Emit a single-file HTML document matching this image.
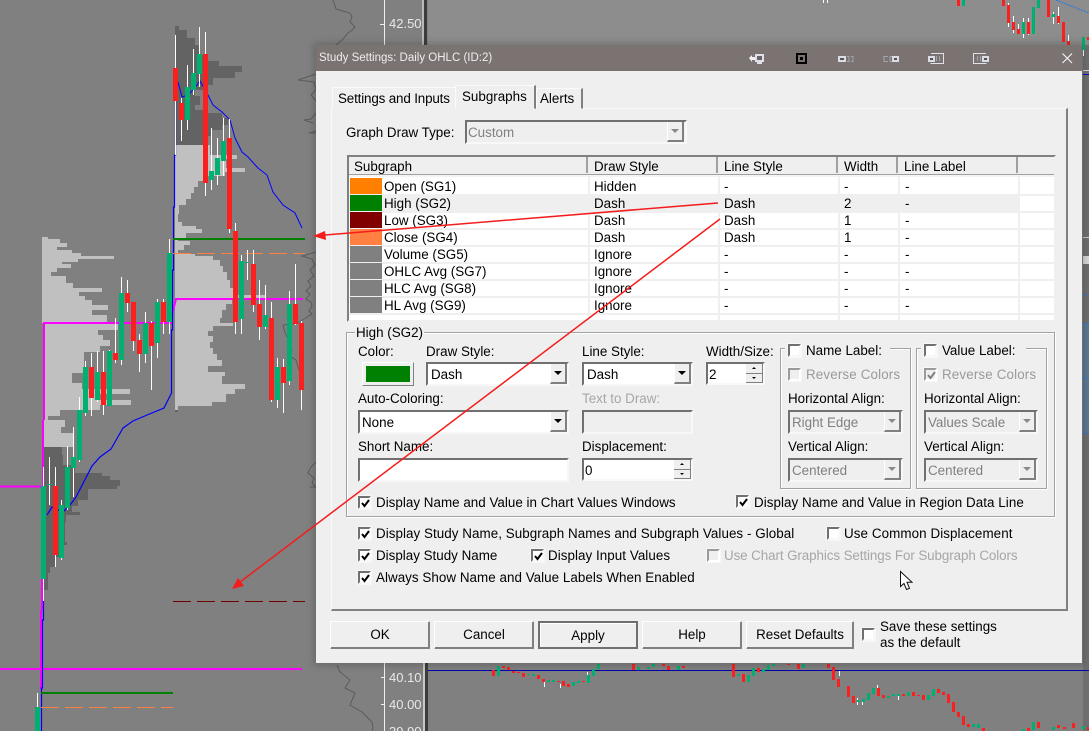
<!DOCTYPE html>
<html><head><meta charset="utf-8">
<style>
html,body{margin:0;padding:0;background:#808080}
#root{position:relative;width:1089px;height:731px;overflow:hidden;background:#808080;font:13.4px/16px "Liberation Sans",sans-serif;color:#000}
svg.c{position:absolute;left:0;top:0}
#dlg{position:absolute;left:316px;top:45px;width:766px;height:618px;background:#efefef;box-shadow:0 0 7px 2px rgba(40,40,40,.28)}
#title{position:absolute;left:316px;top:45px;width:766px;height:26px;background:#7b7272}
.t{position:absolute;white-space:nowrap;line-height:16px;font-size:13.4px;margin-top:1px}
.g{color:#9a9a9a}
.w{color:#f0eeee}
.b{position:absolute;box-sizing:border-box}
.f{position:absolute;box-sizing:border-box;background:#fff;border:2px solid;border-color:#707070 #f8f8f8 #f8f8f8 #707070}
.f.d{background:#efefef}
.ab{position:absolute;right:0;top:0;bottom:0;width:17px;background:#efefef;border-left:1px solid #fff;border-right:2px solid #808080;border-bottom:2px solid #808080;box-sizing:border-box}
.ab:after{content:"";position:absolute;left:3px;top:7px;border:4px solid transparent;border-top:4px solid #000;border-bottom:0}
.d .ab:after{border-top-color:#8a8a8a}
.sp{position:absolute;right:0;width:17px;height:10px;background:#efefef;border-right:1px solid #808080;border-bottom:1px solid #808080;box-sizing:border-box}
.sp:after{content:"";position:absolute;left:6px;top:3px;border:2px solid transparent}
.sp.u{top:0}.sp.u:after{border-bottom:2px solid #000;border-top:0}
.sp.n{top:10px}.sp.n:after{border-top:2px solid #000;border-bottom:0}
.cb{position:absolute;box-sizing:border-box;width:13px;height:13px;background:#fff;border:2px solid;border-color:#707070 #f8f8f8 #f8f8f8 #707070;box-shadow:0 0 0 .5px #fff}
.cb.d{background:#efefef;border-color:#9a9a9a #fff #fff #9a9a9a}
.cb svg{position:absolute;left:-1px;top:-1px}
.btn{position:absolute;box-sizing:border-box;top:621px;height:28px;background:#efefef;border:1px solid;border-color:#fff #808080 #808080 #fff;box-shadow:inset -1px -1px 0 #808080;text-align:center;line-height:26px}
.grp{position:absolute;box-sizing:border-box;border:1px solid #a2a2a2;box-shadow:1px 1px 0 #fff,inset 1px 1px 0 #fff}
.sw{position:absolute;left:350px;width:32px;height:16px}
.hl{position:absolute;left:349px;width:706px;height:2px;background:#efefef}
.vl{position:absolute;top:176px;height:144px;width:2px;background:#efefef}
.hs{position:absolute;top:157px;width:2px;height:16px;background:#a0a0a0}
</style></head><body>
<div id="root">
<svg class="c" width="1089" height="731" viewBox="0 0 1089 731" shape-rendering="crispEdges">
<rect x="0" y="0" width="1089" height="731" fill="#808080"/>
<rect x="428" y="0" width="661" height="45" fill="#8d8d8d"/>
<rect x="384" y="0" width="1" height="45" fill="#f0f0f0"/>
<rect x="422" y="0" width="2" height="45" fill="#f0f0f0" opacity=".5"/>
<rect x="424" y="0" width="3" height="45" fill="#3c3c3c"/>
<rect x="384" y="663" width="1" height="68" fill="#f0f0f0"/>
<rect x="423" y="663" width="2" height="68" fill="#c8c8c8"/>
<rect x="425" y="663" width="3" height="68" fill="#3c3c3c"/>
<rect x="380" y="24" width="4" height="1" fill="#eee"/><rect x="381" y="677" width="3" height="1" fill="#eee"/><rect x="381" y="704" width="3" height="1" fill="#eee"/>
<rect x="1083" y="45" width="6" height="686" fill="#6f6f6f"/>
<rect x="1083" y="323" width="6" height="110" fill="#5a7896"/>
<rect x="1083" y="70" width="6" height="1" fill="#ddd"/><rect x="1083" y="74" width="6" height="1" fill="#0000d8"/>
<rect x="1083" y="237" width="6" height="1" fill="#ccc"/><rect x="1083" y="256" width="6" height="8" fill="#d8d8d8"/>
<rect x="1083" y="323" width="4" height="1" fill="#1e78e0"/><rect x="1083" y="378" width="4" height="1" fill="#1e78e0"/><rect x="1083" y="433" width="4" height="1" fill="#1e78e0"/><rect x="1083" y="294" width="4" height="1" fill="#1e78e0"/>
<rect x="428" y="670" width="661" height="1" fill="#0000b0"/>
<!-- profiles dark -->
<path fill="#636363" d="M175 26H179V30H187V38H195V45H200V55H203V61H219V66H242V72H235V78H213V85H208V90H195V96H200V105H195V110H207V113H222V118H228V125H222V130H212V136H207V145H175Z"/>
<path fill="#636363" d="M44 447H62V455H63V465H75V473H102V476H110V480H120V486H117V489H88V500H78V506H72V512H80V515H66V522H65V542H67V545H64V557H55V567H50V573H48V590H44Z"/>
<!-- profiles light -->
<path fill="#c0c0c0" d="M175 145H210V155H237V159H226V168H245V172H225V176H205V181H198V187H194V193H191V199H186V205H179V214H178V222H182V226H196V229H202V233H186V238H178V241H190V245H184V250H178V254H195V256H213V260H220V266H223V272H227V280H230V288H233V295H265V298H232V304H226V310H222V318H220V323H233V326H213V331H208V336H213V342H210V348H213V354H217V360H222V366H208V372H225V376H222V384H245V389H235V394H226V402H212V406H178V410H175Z"/>
<path fill="#c0c0c0" d="M42 237H48V239H60V243H67V247H57V250H72V253H81V256H114V259H78V262H62V264H71V268H57V272H51V276H66V283H73V288H102V292H79V296H85V300H92V305H108V310H92V315H107V322H118V330H98V335H103V340H110V346H100V352H84V373H72V383H82V389H130V394H100V400H131V405H100V410H60V416H48V420H65V427H61V433H73V447H44V323H42Z"/>
<rect x="175" y="410" width="3" height="2" fill="#636363"/>
<!-- depth outlines -->
<g fill="none" stroke="#5c5c5c" stroke-width="1" shape-rendering="auto">
<path d="M316 74L298 80l16 2 2 8-5 5 5 6M316 113l-5 6-7 1 9 3M316 131l-7 2h7M316 252l-14 4 10 3 3 6-5 5 4 6-6 5 3 5-5 5 4 3-4 5 5 3 1 4-3 5 3 3-8 5-6 4-15 2 2 8 3 6 1 6 3 5-2 6 6 4 3 10 4 5-3 10 4 4M316 462l-5 5-3 6 6 5-2 5 4 4-6 0"/>
<path d="M333 0l3 9 14 4 2 4-2 5 5 5-3 3-5 4-4 5-7 6"/>
<path d="M337 665l3 7 10 8-5 8 10 5-5 12 12 7 10 10 1 6-1 3"/>
</g>
<!-- lines -->
<g fill="none" shape-rendering="auto">
<path stroke="#ff00ff" stroke-width="2" d="M44 420V323H172V315L176 299H303M43 420V486M42 486V610M41 610V690"/>
<path stroke="#ff00ff" stroke-width="2" d="M0 486.500H41M0 669H302"/>
<path stroke="#0000ff" stroke-width="1.200" d="M175.500 100V155H174.500V207H173.500V270H172.500V330H171.500V393L164 408 147 415 133 421 123 428 111 449 100 457 92 466 76 497 70 505 63 512 52 507 47 515M43.500 600V620H42.500V688H41.500V731"/>
<path stroke="#0000ff" stroke-width="1" d="M178 82L182 97 188 95 193 90 200 81 208 95 213 105 222 112 230 120 235 138 242 152 248 157 258 168 267 175 273 192 283 205 295 213 302 228"/>
<path stroke="#1e78e0" stroke-width="1" stroke-dasharray="2 1" d="M1056 0L1089 13"/>
</g>
<rect x="173" y="238" width="132" height="2" fill="#008000"/>
<path d="M173 253.500H305" stroke="#ff8040" stroke-dasharray="18 6"/>
<path d="M173 601.500H305" stroke="#700000" stroke-dasharray="18 6"/>
<rect x="41" y="692" width="132" height="2" fill="#008000"/>
<path d="M41 707.500H173" stroke="#ff8040" stroke-dasharray="18 6"/>
<!-- wicks -->
<path stroke="#fff" fill="none" d="M175.500 35V155M181.500 98V141M187.500 65V130M193.500 49V95M199.500 27V87M205.500 32V196M211.500 128V190M217.500 138V185M223.500 118V176M229.500 119V233M235.500 223V334M241.500 255V334M247.500 250V280M253.500 250V312M259.500 280V340M265.500 285V329M271.500 302V402M277.500 358V408M283.500 359V413M289.500 291V385M295.500 264V325M301.500 321V410M43.500 467V601M49.500 457V505M55.500 467V567M61.500 500V560M67.500 446V510M73.500 427V497M79.500 397V462M85.500 361V416M91.500 353V416M97.500 351V402M103.500 351V415M109.500 350V406M115.500 318V363M121.500 277V365M127.500 280V312M133.500 302V351M139.500 334V372M145.500 312V363M151.500 321V390M157.500 299V358M163.500 299V334M169.500 239V334M37.500 693V707M1008.500 3V27M1013.500 16V33M1018.500 24V34M1023.500 18V38M1028.500 18V35M1053.500 12V24M1058.500 7V24M1068.500 35V45M823.500 0V3M827.500 0V3M1083.500 50V56M839.500 671V676M544.500 680V687M560.500 684V688M587.500 672V678M857.500 698V705M862.500 699V705M877.500 685V690M898.500 694V700"/>
<!-- red -->
<path fill="#fa2020" d="M173 68h5v33h-5zM179 103h5v17h-5zM203 54h5v129h-5zM227 138h5v91h-5zM233 231h5v91h-5zM251 264h5v41h-5zM257 304h5v23h-5zM269 318h5v82h-5zM281 367h5v16h-5zM293 304h5v20h-5zM299 323h5v67h-5zM53 486h5v69h-5zM89 367h5v31h-5zM101 372h5v33h-5zM113 353h5v7h-5zM125 293h5v10h-5zM131 302h5v39h-5zM137 340h5v14h-5zM149 323h5v23h-5zM161 302h5v20h-5zM957 0h3v6h-3zM1002 0h3v6h-3zM1007 5h3v18h-3zM1012 22h3v8h-3zM1017 29h3v5h-3zM1027 22h3v12h-3zM1047 0h3v17h-3zM1057 16h3v7h-3zM1062 22h3v20h-3zM1067 41h3v4h-3zM1087 37h2v3h-2zM492 670h3v6h-3zM502 666h3v2h-3zM507 667h3v3h-3zM512 671h3v2h-3zM517 672h3v1h-3zM522 673h3v4h-3zM537 675h3v4h-3zM542 679h3v3h-3zM557 681h3v1h-3zM562 681h3v5h-3zM567 684h3v3h-3zM582 681h3v1h-3zM632 664h3v6h-3zM662 664h3v2h-3zM667 666h3v4h-3zM682 666h3v2h-3zM732 664h3v13h-3zM742 674h3v8h-3zM757 668h3v4h-3zM787 664h3v1h-3zM797 664h3v5h-3zM827 664h3v4h-3zM832 667h3v13h-3zM837 679h3v8h-3zM847 686h3v11h-3zM852 696h3v7h-3zM877 688h3v8h-3zM882 695h3v3h-3zM902 694h3v2h-3zM912 692h3v4h-3zM917 695h3v1h-3zM922 695h3v5h-3zM937 689h3v4h-3zM942 692h3v3h-3zM947 694h3v9h-3zM952 702h3v10h-3zM957 712h3v5h-3zM962 716h3v9h-3zM967 724h3v3h-3zM982 728h3v3h-3zM1027 728h3v3h-3zM1037 722h3v6h-3zM1057 725h3v3h-3zM1072 723h3v5h-3zM1087 727h2v3h-2zM1063 727h3v2h-3z"/>
<!-- green -->
<path fill="#00b070" d="M185 87h5v33h-5zM191 73h5v17h-5zM197 54h5v20h-5zM209 171h5v9h-5zM215 158h5v17h-5zM221 141h5v20h-5zM239 261h5v58h-5zM245 262h3v1h-3zM263 315h5v12h-5zM275 367h5v33h-5zM287 304h5v77h-5zM41 486h5v93h-5zM47 484h5v1h-5zM59 505h5v53h-5zM65 467h5v41h-5zM71 457h5v11h-5zM77 410h5v50h-5zM83 367h5v46h-5zM95 372h5v28h-5zM107 351h5v55h-5zM119 293h5v67h-5zM143 323h5v31h-5zM155 302h5v41h-5zM167 253h5v69h-5zM35 707h5v24h-5zM962 0h3v6h-3zM1022 22h3v12h-3zM1032 7h3v27h-3zM1037 0h3v8h-3zM1052 14h3v3h-3zM1082 37h3v13h-3zM497 666h3v10h-3zM527 674h3v1h-3zM532 674h3v2h-3zM547 680h3v2h-3zM552 680h3v2h-3zM572 682h3v4h-3zM577 681h3v2h-3zM587 675h3v8h-3zM592 669h3v7h-3zM597 664h3v5h-3zM637 667h3v3h-3zM647 667h3v2h-3zM652 664h3v3h-3zM677 666h3v4h-3zM737 674h3v2h-3zM747 675h3v7h-3zM752 668h3v8h-3zM762 669h3v3h-3zM767 665h3v5h-3zM772 664h3v2h-3zM802 664h3v4h-3zM857 700h3v2h-3zM862 699h3v3h-3zM867 693h3v7h-3zM872 688h3v6h-3zM887 696h3v2h-3zM892 694h3v2h-3zM897 694h3v2h-3zM907 692h3v4h-3zM927 695h3v5h-3zM932 689h3v7h-3zM972 724h3v3h-3zM977 724h3v4h-3zM1022 729h3v2h-3zM1032 722h3v8h-3zM1052 727h3v3h-3zM1082 726h3v3h-3z"/>
</svg>
<span class="t" style="left:389px;top:15px;color:#e8e8e8;font-size:13px">42.50</span>
<span class="t" style="left:389px;top:669px;color:#e8e8e8;font-size:13px">40.10</span>
<span class="t" style="left:389px;top:696px;color:#e8e8e8;font-size:13px">40.00</span>
<span class="t" style="left:389px;top:723px;color:#e8e8e8;font-size:13px">39.90</span>

<div id="dlg"></div>
<div id="title"></div>
<span class="t w" style="left:319px;top:49px;font-size:11.5px">Study Settings: Daily OHLC (ID:2)</span>
<svg class="c" width="1089" height="80" fill="none" shape-rendering="crispEdges" style="z-index:1">
<path d="M749 58l3-3v2h3v3h-3v2z" fill="#f0f0f4" shape-rendering="auto"/>
<rect x="756" y="55" width="7" height="6" stroke="#dfe0e8" stroke-width="2" fill="#6a6468"/>
<path d="M757 63h5" stroke="#dfe0e8" stroke-width="2"/>
<rect x="797" y="54" width="9" height="9" stroke="#000" stroke-width="2"/><rect x="800" y="57" width="3" height="3" fill="#000"/>
<rect x="839" y="57" width="6" height="4" stroke="#dcdce4" stroke-width="2" fill="#55505a"/>
<path d="M847 56.500h2v5h-2M851 56.500h2v5h-2" stroke="#a4a4ac"/>
<path d="M888 56.500h-4v5h4M892 56.500h-2v5h2" stroke="#a4a4ac"/>
<rect x="893" y="57" width="5" height="4" stroke="#dcdce4" stroke-width="2" fill="#55505a"/>
<path d="M931 53.500h12.500v10h-13" stroke="#e0e0e8"/>
<rect x="929" y="57" width="5" height="4" stroke="#dcdce4" stroke-width="2" fill="#55505a"/>
<path d="M936.500 56v5M939.500 56v5" stroke="#a4a4ac"/>
<path d="M986 53.500h-12.500v10h13" stroke="#e0e0e8"/>
<rect x="983" y="57" width="5" height="4" stroke="#dcdce4" stroke-width="2" fill="#55505a"/>
<path d="M977.500 56v5M980.500 56v5" stroke="#a4a4ac"/>
<path d="M1062.500 53.500l9.500 9.500M1072 53.500l-9.500 9.500" stroke="#f2f2f2" stroke-width="1.200" shape-rendering="auto"/>
</svg>

<!-- panel -->
<div class="b" style="left:331px;top:108px;width:737px;height:503px;border:2px solid;border-color:#fafafa #808080 #808080 #fafafa;border-top-width:1px;border-left-width:1px"></div>
<!-- tabs -->
<div class="b" style="left:332px;top:87px;width:125px;height:22px;background:#efefef;border:1px solid;border-color:#fafafa #efefef #efefef #fafafa"></div>
<div class="b" style="left:455px;top:85px;width:81px;height:24px;background:#efefef;border:1px solid;border-color:#fafafa #808080 #efefef #fafafa;border-right-width:2px"></div>
<div class="b" style="left:536px;top:88px;width:47px;height:21px;background:#efefef;border:1px solid;border-color:#fafafa #808080 #efefef #fafafa;border-right-width:2px"></div>
<span class="t" style="left:338px;top:90px;letter-spacing:-.15px">Settings and Inputs</span>
<span class="t" style="left:462px;top:88px">Subgraphs</span>
<span class="t" style="left:540px;top:90px">Alerts</span>

<span class="t" style="left:346px;top:124px">Graph Draw Type:</span>
<div class="f d" style="left:465px;top:120px;width:222px;height:24px"><div class="ab" style="right:1px"></div></div>
<span class="t" style="left:468px;top:124px;color:#808080">Custom</span>

<!-- grid -->
<div class="b" style="left:347px;top:155px;width:709px;height:167px;background:#fff;border:2px solid;border-color:#808080 #efefef #efefef #808080"></div>
<div class="b" style="left:349px;top:157px;width:705px;height:18px;background:#efefef;border-bottom:1px solid #a0a0a0"></div>
<div class="b" style="left:349px;top:175px;width:705px;height:2px;background:#f4f4f4"></div>
<div class="hs" style="left:586px"></div><div class="hs" style="left:716px"></div><div class="hs" style="left:836px"></div><div class="hs" style="left:896px"></div><div class="hs" style="left:1016px"></div>
<span class="t" style="left:354px;top:158px">Subgraph</span>
<span class="t" style="left:594px;top:158px">Draw Style</span>
<span class="t" style="left:724px;top:158px">Line Style</span>
<span class="t" style="left:844px;top:158px">Width</span>
<span class="t" style="left:904px;top:158px">Line Label</span>
<div class="b" style="left:349px;top:194px;width:669px;height:18px;background:#efefef"></div>
<div class="hl" style="top:194px"></div><div class="hl" style="top:211px"></div><div class="hl" style="top:228px"></div><div class="hl" style="top:245px"></div><div class="hl" style="top:262px"></div><div class="hl" style="top:279px"></div><div class="hl" style="top:296px"></div><div class="hl" style="top:313px"></div>
<div class="vl" style="left:588px"></div><div class="vl" style="left:718px"></div><div class="vl" style="left:838px"></div><div class="vl" style="left:898px"></div><div class="vl" style="left:1018px"></div>
<div class="sw" style="top:178px;background:#ff8000"></div>
<div class="sw" style="top:195px;background:#008000"></div>
<div class="sw" style="top:212px;background:#800000"></div>
<div class="sw" style="top:229px;background:#ff8040"></div>
<div class="sw" style="top:246px;background:#808080"></div>
<div class="sw" style="top:263px;background:#808080"></div>
<div class="sw" style="top:280px;background:#808080"></div>
<div class="sw" style="top:297px;background:#808080"></div>
<span class="t" style="left:384px;top:178px">Open (SG1)</span><span class="t" style="left:594px;top:178px">Hidden</span><span class="t" style="left:724px;top:178px">-</span><span class="t" style="left:844px;top:178px">-</span><span class="t" style="left:905px;top:178px">-</span>
<span class="t" style="left:384px;top:195px">High (SG2)</span><span class="t" style="left:594px;top:195px">Dash</span><span class="t" style="left:724px;top:195px">Dash</span><span class="t" style="left:844px;top:195px">2</span><span class="t" style="left:905px;top:195px">-</span>
<span class="t" style="left:384px;top:212px">Low (SG3)</span><span class="t" style="left:594px;top:212px">Dash</span><span class="t" style="left:724px;top:212px">Dash</span><span class="t" style="left:844px;top:212px">1</span><span class="t" style="left:905px;top:212px">-</span>
<span class="t" style="left:384px;top:229px">Close (SG4)</span><span class="t" style="left:594px;top:229px">Dash</span><span class="t" style="left:724px;top:229px">Dash</span><span class="t" style="left:844px;top:229px">1</span><span class="t" style="left:905px;top:229px">-</span>
<span class="t" style="left:384px;top:246px">Volume (SG5)</span><span class="t" style="left:594px;top:246px">Ignore</span><span class="t" style="left:724px;top:246px">-</span><span class="t" style="left:844px;top:246px">-</span><span class="t" style="left:905px;top:246px">-</span>
<span class="t" style="left:384px;top:263px">OHLC Avg (SG7)</span><span class="t" style="left:594px;top:263px">Ignore</span><span class="t" style="left:724px;top:263px">-</span><span class="t" style="left:844px;top:263px">-</span><span class="t" style="left:905px;top:263px">-</span>
<span class="t" style="left:384px;top:280px">HLC Avg (SG8)</span><span class="t" style="left:594px;top:280px">Ignore</span><span class="t" style="left:724px;top:280px">-</span><span class="t" style="left:844px;top:280px">-</span><span class="t" style="left:905px;top:280px">-</span>
<span class="t" style="left:384px;top:297px">HL Avg (SG9)</span><span class="t" style="left:594px;top:297px">Ignore</span><span class="t" style="left:724px;top:297px">-</span><span class="t" style="left:844px;top:297px">-</span><span class="t" style="left:905px;top:297px">-</span>

<!-- group -->
<div class="grp" style="left:346px;top:332px;width:709px;height:185px"></div>
<span class="t" style="left:355px;top:324px;background:#efefef;padding:0 1px">High (SG2)</span>
<span class="t" style="left:358px;top:343px">Color:</span>
<span class="t" style="left:426px;top:343px">Draw Style:</span>
<span class="t" style="left:582px;top:343px">Line Style:</span>
<span class="t" style="left:706px;top:343px">Width/Size:</span>
<div class="b" style="left:362px;top:362px;width:52px;height:24px;background:#efefef;border:1px solid;border-color:#fff #808080 #808080 #fff"><div class="b" style="left:3px;top:3px;width:44px;height:16px;background:#008000"></div></div>
<div class="f" style="left:426px;top:362px;width:143px;height:24px"><div class="ab"></div></div><span class="t" style="left:431px;top:366px">Dash</span>
<div class="f" style="left:582px;top:362px;width:111px;height:24px"><div class="ab"></div></div><span class="t" style="left:587px;top:366px">Dash</span>
<div class="f" style="left:706px;top:362px;width:59px;height:23px"><div class="sp u" style="height:10px"></div><div class="sp n" style="height:9px"></div></div><span class="t" style="left:709px;top:366px">2</span>
<span class="t" style="left:358px;top:390px">Auto-Coloring:</span>
<span class="t g" style="left:582px;top:390px;color:#a6a6a6">Text to Draw:</span>
<div class="f" style="left:358px;top:410px;width:211px;height:24px"><div class="ab"></div></div><span class="t" style="left:362px;top:414px">None</span>
<div class="f d" style="left:582px;top:410px;width:111px;height:24px"></div>
<span class="t" style="left:358px;top:438px">Short Name:</span>
<span class="t" style="left:582px;top:438px">Displacement:</span>
<div class="f" style="left:358px;top:458px;width:211px;height:24px"></div>
<div class="f" style="left:582px;top:458px;width:111px;height:23px"><div class="sp u"></div><div class="sp n" style="height:9px"></div></div><span class="t" style="left:585px;top:462px">0</span>

<div class="cb" style="left:358px;top:496px"><svg width="13" height="13"><path d="M3 6l2.500 3 4.500-6" stroke="#000" stroke-width="2" fill="none"/></svg></div>
<span class="t" style="left:376px;top:494px;letter-spacing:.02px">Display Name and Value in Chart Values Windows</span>
<div class="cb" style="left:736px;top:495px"><svg width="13" height="13"><path d="M3 6l2.500 3 4.500-6" stroke="#000" stroke-width="2" fill="none"/></svg></div>
<span class="t" style="left:754px;top:494px;letter-spacing:.05px">Display Name and Value in Region Data Line</span>

<!-- name label -->
<div class="grp" style="left:780px;top:348px;width:131px;height:141px"></div>
<div class="grp" style="left:916px;top:348px;width:131px;height:141px"></div>
<div class="b" style="left:785px;top:342px;width:105px;height:14px;background:#efefef"></div>
<div class="b" style="left:921px;top:342px;width:105px;height:14px;background:#efefef"></div>
<div class="cb" style="left:788px;top:344px"></div><span class="t" style="left:806px;top:342px">Name Label:</span>
<div class="cb d" style="left:788px;top:368px"></div><span class="t g" style="left:806px;top:366px;letter-spacing:.14px">Reverse Colors</span>
<span class="t" style="left:788px;top:390px">Horizontal Align:</span>
<div class="f d" style="left:788px;top:410px;width:115px;height:24px"><div class="ab"></div></div><span class="t" style="left:792px;top:414px;color:#808080">Right Edge</span>
<span class="t" style="left:788px;top:438px">Vertical Align:</span>
<div class="f d" style="left:788px;top:458px;width:115px;height:24px"><div class="ab"></div></div><span class="t" style="left:792px;top:462px;color:#808080">Centered</span>

<div class="cb" style="left:924px;top:344px"></div><span class="t" style="left:942px;top:342px">Value Label:</span>
<div class="cb d" style="left:924px;top:368px"><svg width="13" height="13"><path d="M3 6l2.500 3 4.500-6" stroke="#808080" stroke-width="2" fill="none"/></svg></div><span class="t g" style="left:942px;top:366px;letter-spacing:.14px">Reverse Colors</span>
<span class="t" style="left:924px;top:390px">Horizontal Align:</span>
<div class="f d" style="left:924px;top:410px;width:114px;height:24px"><div class="ab"></div></div><span class="t" style="left:928px;top:414px;color:#808080">Values Scale</span>
<span class="t" style="left:924px;top:438px">Vertical Align:</span>
<div class="f d" style="left:924px;top:458px;width:114px;height:24px"><div class="ab"></div></div><span class="t" style="left:928px;top:462px;color:#808080">Centered</span>

<!-- lower checks -->
<div class="cb" style="left:358px;top:527px"><svg width="13" height="13"><path d="M3 6l2.500 3 4.500-6" stroke="#000" stroke-width="2" fill="none"/></svg></div>
<span class="t" style="left:376px;top:525px;letter-spacing:.05px">Display Study Name, Subgraph Names and Subgraph Values - Global</span>
<div class="cb" style="left:827px;top:527px"></div>
<span class="t" style="left:844px;top:525px;letter-spacing:.08px">Use Common Displacement</span>
<div class="cb" style="left:358px;top:549px"><svg width="13" height="13"><path d="M3 6l2.500 3 4.500-6" stroke="#000" stroke-width="2" fill="none"/></svg></div>
<span class="t" style="left:376px;top:547px">Display Study Name</span>
<div class="cb" style="left:531px;top:549px"><svg width="13" height="13"><path d="M3 6l2.500 3 4.500-6" stroke="#000" stroke-width="2" fill="none"/></svg></div>
<span class="t" style="left:548px;top:547px;letter-spacing:.05px">Display Input Values</span>
<div class="cb d" style="left:707px;top:549px"></div>
<span class="t g" style="left:724px;top:547px;color:#a6a6a6;letter-spacing:-.09px">Use Chart Graphics Settings For Subgraph Colors</span>
<div class="cb" style="left:358px;top:571px"><svg width="13" height="13"><path d="M3 6l2.500 3 4.500-6" stroke="#000" stroke-width="2" fill="none"/></svg></div>
<span class="t" style="left:376px;top:569px;letter-spacing:.04px">Always Show Name and Value Labels When Enabled</span>

<!-- buttons -->
<div class="btn" style="left:330px;width:100px">OK</div>
<div class="btn" style="left:434px;width:100px">Cancel</div>
<div class="btn" style="left:538px;width:100px;border:2px solid;border-color:#707070 #707070 #707070 #707070;box-shadow:inset 1px 1px 0 #fff;line-height:25px">Apply</div>
<div class="btn" style="left:642px;width:100px">Help</div>
<div class="btn" style="left:746px;width:108px">Reset Defaults</div>
<div class="cb" style="left:862px;top:628px"></div>
<span class="t" style="left:880px;top:618px">Save these settings</span>
<span class="t" style="left:880px;top:634px">as the default</span>

<!-- overlay arrows and cursor -->
<svg class="c" width="1089" height="731" style="z-index:5" fill="none">
<path d="M718 203L322 235.300" stroke="#f41c1c" stroke-width="1.500"/>
<path d="M313 236l12-5 1 9z" fill="#f41c1c"/>
<path d="M720 219L240 582" stroke="#f41c1c" stroke-width="1.500"/>
<path d="M232 589l6-11 6 8z" fill="#f41c1c"/>
<path d="M900.500 571.500v15l3.500-3 2.500 6 3-1.200-2.500-6h5z" fill="#fff" stroke="#111" stroke-width="1"/>
</svg>
</div>
</body></html>
